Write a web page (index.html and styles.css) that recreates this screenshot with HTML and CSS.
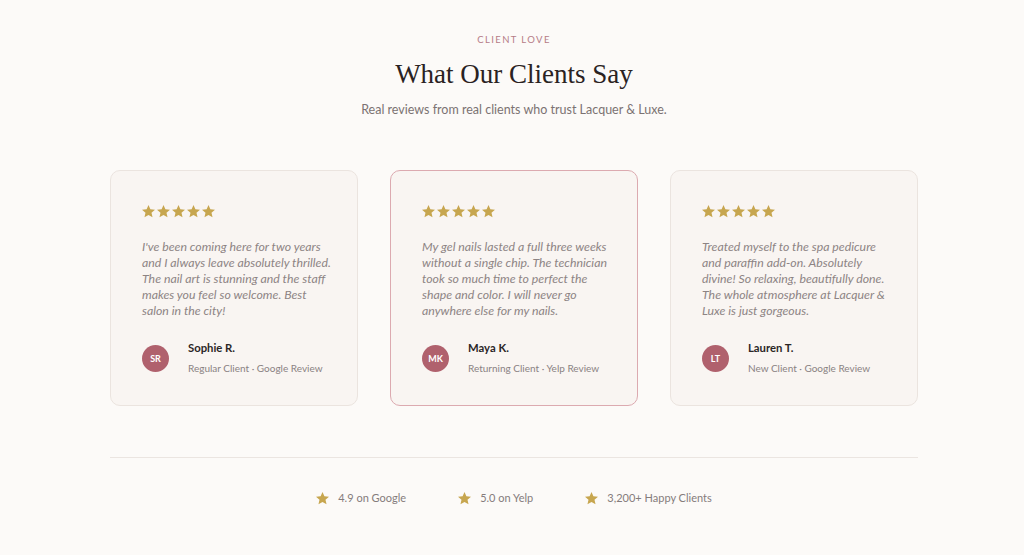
FILE: index.html
```html
<!DOCTYPE html>
<html lang="en">
  <head>
    <meta charset="UTF-8" />
    <meta name="viewport" content="width=device-width, initial-scale=1.0" />
    <title>Client Love - Lacquer &amp; Luxe</title>
    <link rel="stylesheet" href="styles.css">
  </head>

  <body>
    <section class="testimonials">
      <p class="eyebrow">CLIENT LOVE</p>
      <h2 class="title">What Our Clients Say</h2>
      <p class="subtitle">Real reviews from real clients who trust Lacquer &amp; Luxe.</p>

      <div class="cards">
        <div class="card">
          <div class="stars">
            <svg viewBox="2 2 20 20"><path d="M12 2l2.9 6.6 7.1.6-5.4 4.7 1.6 7-6.2-3.7-6.2 3.7 1.6-7L2 9.2l7.1-.6z"/></svg>
            <svg viewBox="2 2 20 20"><path d="M12 2l2.9 6.6 7.1.6-5.4 4.7 1.6 7-6.2-3.7-6.2 3.7 1.6-7L2 9.2l7.1-.6z"/></svg>
            <svg viewBox="2 2 20 20"><path d="M12 2l2.9 6.6 7.1.6-5.4 4.7 1.6 7-6.2-3.7-6.2 3.7 1.6-7L2 9.2l7.1-.6z"/></svg>
            <svg viewBox="2 2 20 20"><path d="M12 2l2.9 6.6 7.1.6-5.4 4.7 1.6 7-6.2-3.7-6.2 3.7 1.6-7L2 9.2l7.1-.6z"/></svg>
            <svg viewBox="2 2 20 20"><path d="M12 2l2.9 6.6 7.1.6-5.4 4.7 1.6 7-6.2-3.7-6.2 3.7 1.6-7L2 9.2l7.1-.6z"/></svg>
          </div>
          <p class="quote">
            I've been coming here for two years and I always leave absolutely
            thrilled. The nail art is stunning and the staff makes you feel so
            welcome. Best salon in the city!
          </p>
          <div class="author">
            <div class="avatar">SR</div>
            <div>
              <p class="name">Sophie R.</p>
              <p class="meta">Regular Client · Google Review</p>
            </div>
          </div>
        </div>

        <div class="card featured">
          <div class="stars">
            <svg viewBox="2 2 20 20"><path d="M12 2l2.9 6.6 7.1.6-5.4 4.7 1.6 7-6.2-3.7-6.2 3.7 1.6-7L2 9.2l7.1-.6z"/></svg>
            <svg viewBox="2 2 20 20"><path d="M12 2l2.9 6.6 7.1.6-5.4 4.7 1.6 7-6.2-3.7-6.2 3.7 1.6-7L2 9.2l7.1-.6z"/></svg>
            <svg viewBox="2 2 20 20"><path d="M12 2l2.9 6.6 7.1.6-5.4 4.7 1.6 7-6.2-3.7-6.2 3.7 1.6-7L2 9.2l7.1-.6z"/></svg>
            <svg viewBox="2 2 20 20"><path d="M12 2l2.9 6.6 7.1.6-5.4 4.7 1.6 7-6.2-3.7-6.2 3.7 1.6-7L2 9.2l7.1-.6z"/></svg>
            <svg viewBox="2 2 20 20"><path d="M12 2l2.9 6.6 7.1.6-5.4 4.7 1.6 7-6.2-3.7-6.2 3.7 1.6-7L2 9.2l7.1-.6z"/></svg>
          </div>
          <p class="quote">
            My gel nails lasted a full three weeks without a single chip. The
            technician took so much time to perfect the shape and color. I will
            never go anywhere else for my nails.
          </p>
          <div class="author">
            <div class="avatar">MK</div>
            <div>
              <p class="name">Maya K.</p>
              <p class="meta">Returning Client · Yelp Review</p>
            </div>
          </div>
        </div>

        <div class="card">
          <div class="stars">
            <svg viewBox="2 2 20 20"><path d="M12 2l2.9 6.6 7.1.6-5.4 4.7 1.6 7-6.2-3.7-6.2 3.7 1.6-7L2 9.2l7.1-.6z"/></svg>
            <svg viewBox="2 2 20 20"><path d="M12 2l2.9 6.6 7.1.6-5.4 4.7 1.6 7-6.2-3.7-6.2 3.7 1.6-7L2 9.2l7.1-.6z"/></svg>
            <svg viewBox="2 2 20 20"><path d="M12 2l2.9 6.6 7.1.6-5.4 4.7 1.6 7-6.2-3.7-6.2 3.7 1.6-7L2 9.2l7.1-.6z"/></svg>
            <svg viewBox="2 2 20 20"><path d="M12 2l2.9 6.6 7.1.6-5.4 4.7 1.6 7-6.2-3.7-6.2 3.7 1.6-7L2 9.2l7.1-.6z"/></svg>
            <svg viewBox="2 2 20 20"><path d="M12 2l2.9 6.6 7.1.6-5.4 4.7 1.6 7-6.2-3.7-6.2 3.7 1.6-7L2 9.2l7.1-.6z"/></svg>
          </div>
          <p class="quote">
            Treated myself to the spa pedicure and paraffin add-on. Absolutely
            divine! So relaxing, beautifully done. The whole atmosphere at
            Lacquer &amp; Luxe is just gorgeous.
          </p>
          <div class="author">
            <div class="avatar">LT</div>
            <div>
              <p class="name">Lauren T.</p>
              <p class="meta">New Client · Google Review</p>
            </div>
          </div>
        </div>
      </div>

      <div class="stats">
        <div class="stat">
          <svg viewBox="2 2 20 20"><path d="M12 2l2.9 6.6 7.1.6-5.4 4.7 1.6 7-6.2-3.7-6.2 3.7 1.6-7L2 9.2l7.1-.6z"/></svg>
          <span>4.9 on Google</span>
        </div>
        <div class="stat">
          <svg viewBox="2 2 20 20"><path d="M12 2l2.9 6.6 7.1.6-5.4 4.7 1.6 7-6.2-3.7-6.2 3.7 1.6-7L2 9.2l7.1-.6z"/></svg>
          <span>5.0 on Yelp</span>
        </div>
        <div class="stat">
          <svg viewBox="2 2 20 20"><path d="M12 2l2.9 6.6 7.1.6-5.4 4.7 1.6 7-6.2-3.7-6.2 3.7 1.6-7L2 9.2l7.1-.6z"/></svg>
          <span>3,200+ Happy Clients</span>
        </div>
      </div>
    </section>
  </body>
</html>
```

FILE: styles.css
```css
body {
  font-family: Lato, "Noto Sans", sans-serif;
  margin: 0;
  background-color: #fcfaf8;
  color: #2b2424;
}

p {
  margin: 0;
}

.testimonials {
  width: 808px;
  margin: 0 auto;
  padding: 33px 0 40px 4px;
  text-align: center;
}

.eyebrow {
  font-size: 9.5px;
  letter-spacing: 1.4px;
  color: #b57c87;
  line-height: 14px;
}

.title {
  font-family: "Liberation Serif", "DejaVu Serif", serif;
  font-weight: 400;
  font-size: 27px;
  line-height: 34px;
  margin: 10px 0 0;
  color: #2a2222;
}

.subtitle {
  font-size: 12.5px;
  line-height: 18px;
  color: #7b7272;
  margin-top: 10px;
}

.cards {
  display: grid;
  grid-template-columns: repeat(3, 1fr);
  gap: 32px;
  margin-top: 51px;
  text-align: left;
}

.card {
  background-color: #f9f5f2;
  border: 1px solid #ebe4df;
  border-radius: 10px;
  padding: 32px 24px 29px 31px;
}

.card.featured {
  border-color: #dcaab0;
}

.stars {
  display: flex;
  gap: 2px;
  height: 16px;
  align-items: center;
}

.stars svg {
  width: 13px;
  height: 13px;
  fill: #c7a64f;
}

.quote {
  margin-top: 20px;
  font-size: 12.3px;
  line-height: 16px;
  font-style: italic;
  color: #8d8484;
}

.author {
  display: flex;
  align-items: center;
  gap: 19px;
  margin-top: 21px;
}

.avatar {
  width: 27px;
  height: 27px;
  border-radius: 50%;
  background-color: #b0616d;
  color: #fff;
  font-size: 9px;
  font-weight: 700;
  display: flex;
  align-items: center;
  justify-content: center;
  flex-shrink: 0;
}

.name {
  font-size: 11.3px;
  font-weight: 700;
  color: #2b2626;
  line-height: 16px;
}

.meta {
  font-size: 10px;
  color: #8a8282;
  line-height: 16px;
  margin-top: 4px;
}

.stats {
  border-top: 1px solid #ebe5e1;
  margin-top: 51px;
  padding-top: 32px;
  display: flex;
  justify-content: center;
  gap: 52px;
}

.stat {
  display: flex;
  align-items: center;
  gap: 9px;
  font-size: 11px;
  line-height: 16px;
  color: #857c7c;
}

.stat svg {
  width: 13px;
  height: 13px;
  fill: #c7a64f;
}
```
